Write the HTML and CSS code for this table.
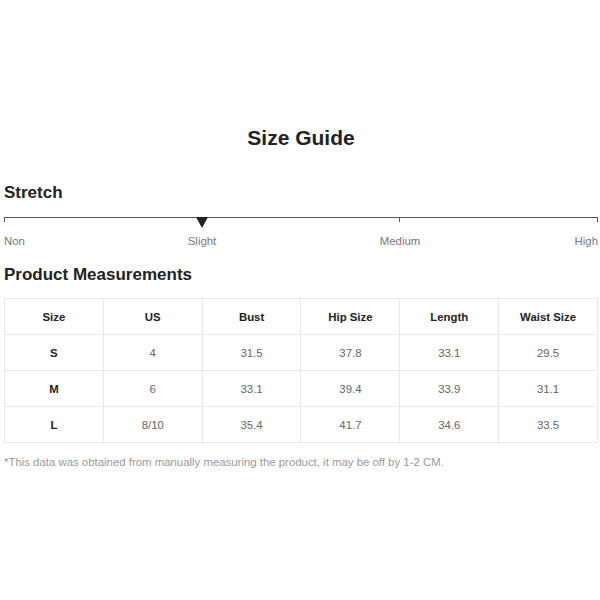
FILE: index.html
```html
<!DOCTYPE html>
<html>
<head>
<meta charset="utf-8">
<link rel="stylesheet" href="styles.css">
</head>
<body>
<div class="page">
  <h1 class="title">Size Guide</h1>
  <h2 class="heading stretch-heading">Stretch</h2>
  <div class="scale">
    <div class="scale-line">
      <span class="seg"></span><span class="seg"></span><span class="seg last"></span>
      <span class="marker"></span>
    </div>
    <div class="scale-labels">
      <span class="lbl l-non">Non</span>
      <span class="lbl l-slight">Slight</span>
      <span class="lbl l-medium">Medium</span>
      <span class="lbl l-high">High</span>
    </div>
  </div>
  <h2 class="heading measure-heading">Product Measurements</h2>
  <table class="size-table">
    <thead>
      <tr><th>Size</th><th>US</th><th>Bust</th><th>Hip Size</th><th>Length</th><th>Waist Size</th></tr>
    </thead>
    <tbody>
      <tr><th>S</th><td>4</td><td>31.5</td><td>37.8</td><td>33.1</td><td>29.5</td></tr>
      <tr><th>M</th><td>6</td><td>33.1</td><td>39.4</td><td>33.9</td><td>31.1</td></tr>
      <tr><th>L</th><td>8/10</td><td>35.4</td><td>41.7</td><td>34.6</td><td>33.5</td></tr>
    </tbody>
  </table>
  <p class="note">*This data was obtained from manually measuring the product, it may be off by 1-2 CM.</p>
</div>
</body>
</html>
```
FILE: styles.css
```css
html, body {
  margin: 0;
  padding: 0;
  background: #fff;
}
body {
  font-family: "Liberation Sans", Arial, sans-serif;
  color: #222;
}
.page {
  width: 594px;
  margin-left: 4px;
  padding-top: 126px;
}
.title {
  margin: 0;
  font-size: 21px;
  line-height: 24px;
  font-weight: 900;
  text-align: center;
  color: #222;
}
.heading {
  margin: 0;
  font-size: 17px;
  line-height: 22px;
  font-weight: bold;
  color: #222;
}
.stretch-heading {
  margin-top: 32px;
}
.scale {
  margin-top: 13px;
}
.scale-line {
  position: relative;
  display: flex;
  height: 5px;
}
.seg {
  flex: 1;
  border-top: 1px solid #555;
  border-left: 1px solid #555;
}
.seg.last {
  border-right: 1px solid #555;
}
.marker {
  position: absolute;
  left: 33.4%;
  top: 0;
  transform: translateX(-50%);
  width: 0;
  height: 0;
  border-left: 6px solid transparent;
  border-right: 6px solid transparent;
  border-top: 11px solid #222;
}
.scale-labels {
  display: grid;
  grid-template-columns: repeat(6, 1fr);
  margin-top: 12px;
  font-size: 11.4px;
  line-height: 14px;
  color: #777;
}
.l-non { grid-column: 1; text-align: left; }
.l-slight { grid-column: 2 / span 2; text-align: center; }
.l-medium { grid-column: 4 / span 2; text-align: center; }
.l-high { grid-column: 6; text-align: right; }
.measure-heading {
  margin-top: 16px;
}
.size-table {
  margin-top: 12px;
  width: 594px;
  border-collapse: collapse;
  table-layout: fixed;
  font-size: 11.4px;
}
.size-table th, .size-table td {
  border: 1px solid #e8e8e8;
  height: 35px;
  padding: 0;
  text-align: center;
  vertical-align: middle;
}
.size-table th {
  font-weight: bold;
  color: #222;
}
.size-table td {
  color: #666;
}
.note {
  margin: 12px 0 0 0;
  font-size: 11.4px;
  line-height: 14px;
  color: #999;
}
```
